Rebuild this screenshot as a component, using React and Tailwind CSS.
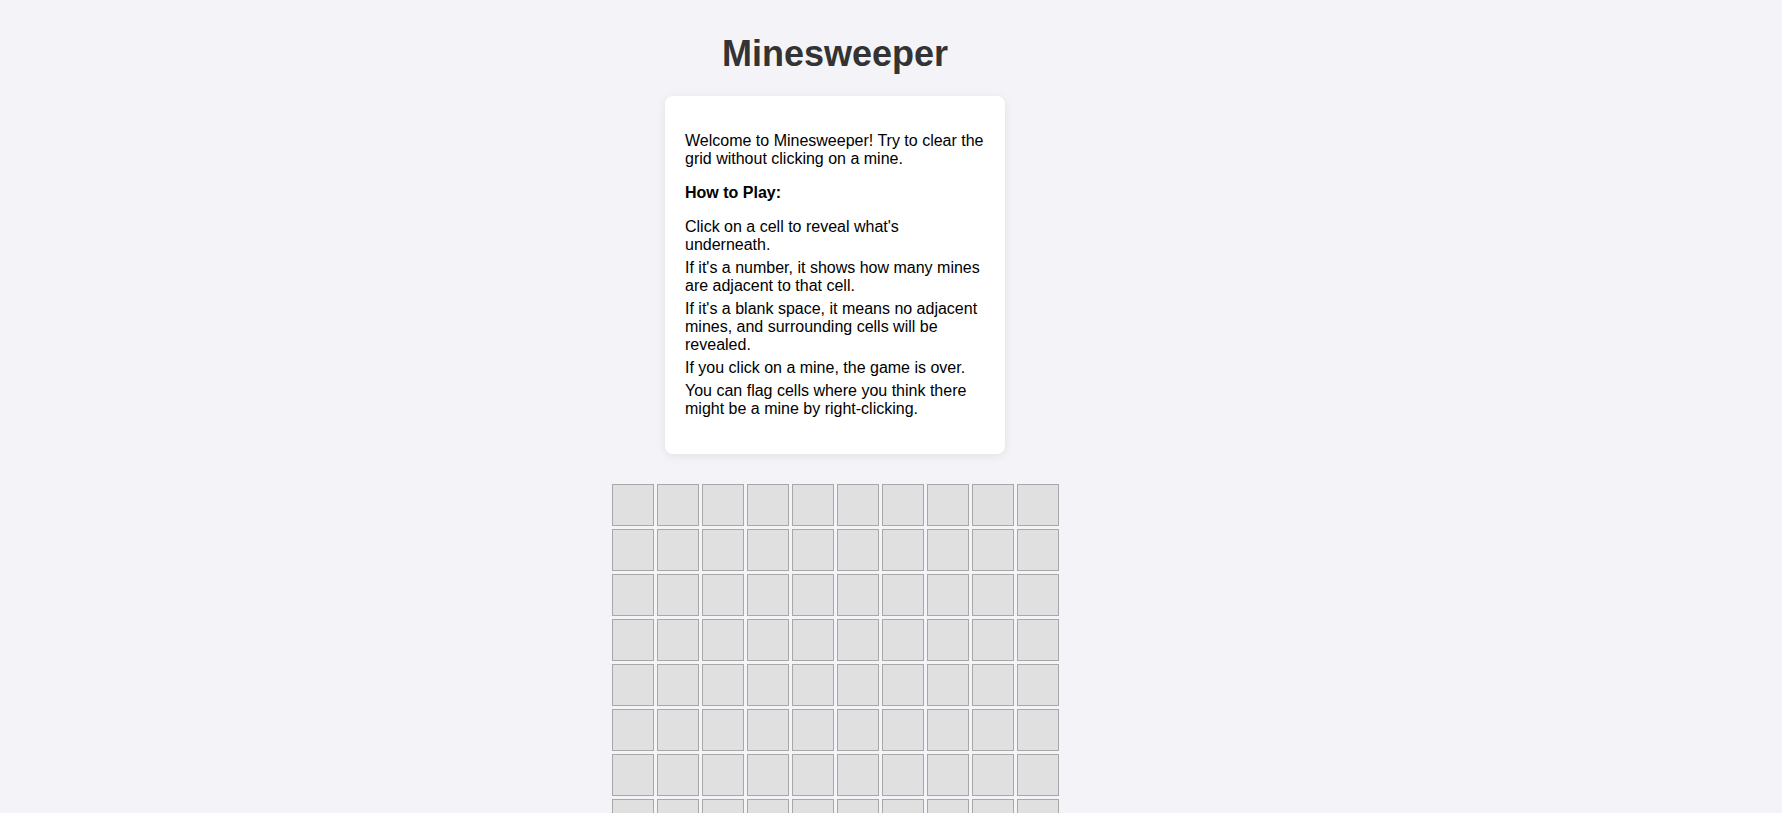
const ROWS = 10
const COLS = 10

const rules = [
  "Click on a cell to reveal what's underneath.",
  "If it's a number, it shows how many mines are adjacent to that cell.",
  "If it's a blank space, it means no adjacent mines, and surrounding cells will be revealed.",
  "If you click on a mine, the game is over.",
  "You can flag cells where you think there might be a mine by right-clicking.",
]

export default function App() {
  return (
    <div className="min-h-screen bg-[#f4f4f8] font-['Liberation_Sans',Arial,sans-serif]">
      <div className="w-[1670px] flex flex-col items-center pt-[33px] pb-10">
        <h1 className="text-[36px] leading-[41px] font-bold text-[#333]">Minesweeper</h1>

        {/* Instructions card */}
        <div className="mt-[22px] w-[340px] bg-white rounded-lg shadow-[0_2px_10px_rgba(0,0,0,0.08)] px-5 py-5 text-black text-base leading-[18px]">
          <p className="mt-4">Welcome to Minesweeper! Try to clear the grid without clicking on a mine.</p>
          <p className="mt-4 font-bold">How to Play:</p>
          <ul className="mt-4 mb-4 flex flex-col gap-[5px]">
            {rules.map((r, i) => (
              <li key={i}>{r}</li>
            ))}
          </ul>
        </div>

        {/* Board */}
        <div className="mt-[30px] grid grid-cols-[repeat(10,42px)] gap-[3px]">
          {[...Array(ROWS * COLS)].map((_, i) => (
            <div key={i} className="w-[42px] h-[42px] bg-[#e0e0e0] border border-[#a8a8a8]" />
          ))}
        </div>
      </div>
    </div>
  )
}
